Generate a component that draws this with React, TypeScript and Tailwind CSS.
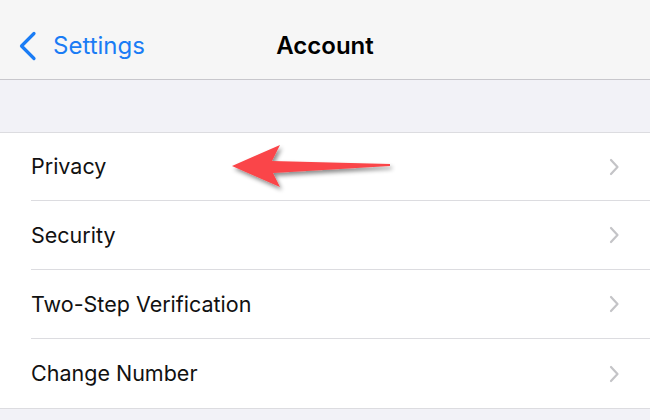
const rows = ["Privacy", "Security", "Two-Step Verification", "Change Number"];

function Chevron() {
  return (
    <svg width="12" height="20" viewBox="0 0 12 20" className="mr-[30px]">
      <path d="M3 3 L9.5 10 L3 17" fill="none" stroke="#c4c4c7" strokeWidth="2.2" strokeLinecap="round" strokeLinejoin="round" />
    </svg>
  );
}

function BackChevron() {
  return (
    <svg width="20" height="30" viewBox="0 0 20 30">
      <path d="M16 2.5 L3.5 15 L16 27.5" fill="none" stroke="#1a7cf5" strokeWidth="3.2" strokeLinecap="round" strokeLinejoin="round" />
    </svg>
  );
}

function Arrow() {
  return (
    <svg width="170" height="56" viewBox="0 0 170 56" className="absolute left-[228px] top-[140px] pointer-events-none">
      <defs>
        <filter id="sh" x="-10%" y="-30%" width="130%" height="170%">
          <feDropShadow dx="2" dy="3" stdDeviation="2" floodColor="#000" floodOpacity="0.45" />
        </filter>
      </defs>
      <path
        d="M4 26 L52 5 L44 21 L162 24 L162 26 L45 33 L52 47 Z"
        fill="#fa4548"
        filter="url(#sh)"
      />
    </svg>
  );
}

export default function App() {
  return (
    <div className="relative w-[650px] h-[420px] bg-[#f2f2f7] overflow-hidden" style={{ fontFamily: "Inter, 'Noto Sans', sans-serif" }}>
      <header className="h-[80px] bg-[#f6f6f6] border-b border-[#c8c7cc] flex items-center relative">
        <div className="flex items-center text-[#1a7cf5] pl-[18px] pt-[12px]">
          <BackChevron />
          <span className="text-[24px] ml-[15px]">Settings</span>
        </div>
        <div className="absolute inset-x-0 top-[12px] bottom-0 flex items-center justify-center pointer-events-none">
          <span className="text-[24px] font-semibold text-black">Account</span>
        </div>
      </header>
      <div className="h-[52px]" />
      <section className="bg-white border-t border-b border-[#dcdce0]">
        {rows.map((r, i) => (
          <div key={r} className="pl-[31px]">
            <div
              className={`flex items-center justify-between ${i === 0 ? "h-[68px]" : "h-[69px]"} ${i < rows.length - 1 ? "border-b border-[#dcdce0]" : ""}`}
            >
              <span className="text-[21.5px] text-[#111]">{r}</span>
              <Chevron />
            </div>
          </div>
        ))}
      </section>
      <Arrow />
    </div>
  );
}
